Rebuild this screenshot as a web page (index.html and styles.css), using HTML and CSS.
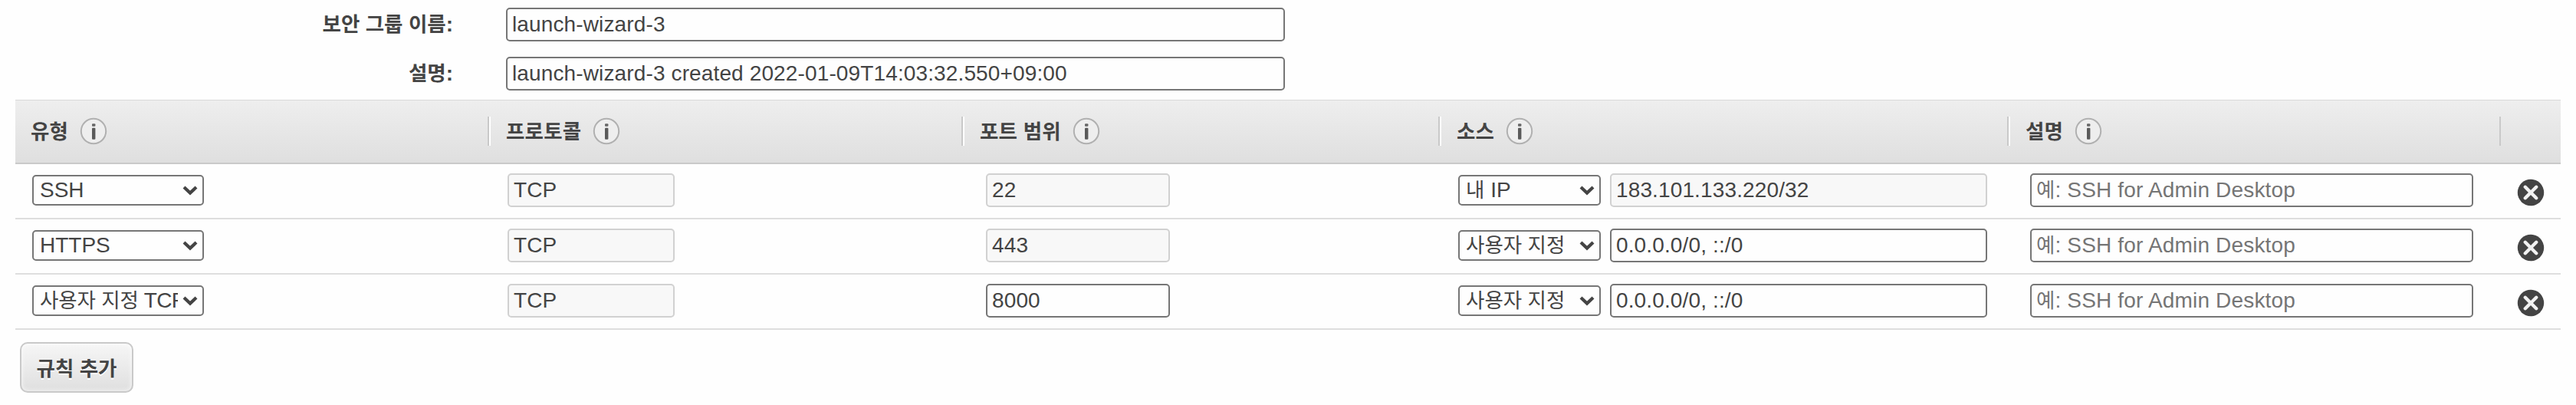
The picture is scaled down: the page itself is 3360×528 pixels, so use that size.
FILE: index.html
```
<!DOCTYPE html>
<html lang="ko">
<head>
<meta charset="utf-8">
<title>보안 그룹</title>
<link rel="stylesheet" href="styles.css">
</head>
<body>
<svg width="0" height="0" class="defs">
  <symbol id="info" viewBox="0 0 36 36"><circle cx="18" cy="18" r="16.2" fill="#eee" stroke="#b0b0b0" stroke-width="2"/><rect x="16" y="8.3" width="4.4" height="3.4" rx="1" fill="#666"/><rect x="16" y="13.8" width="4.4" height="15" rx="1" fill="#5a5a5a"/></symbol>
  <symbol id="chev" viewBox="0 0 20 14"><path d="M2 3 L10 10.6 L18 3" fill="none" stroke="#444" stroke-width="4.2"/></symbol>
  <symbol id="del" viewBox="0 0 36 36"><circle cx="18" cy="18" r="17.2" fill="#444"/><path d="M10.8 10.8 L25.2 25.2 M25.2 10.8 L10.8 25.2" stroke="#f2f2f2" stroke-width="4.4" stroke-linecap="round"/></symbol>
</svg>
<div class="form">
  <div class="field"><div class="label"><span class="ko">보안 그룹 이름</span>:</div><div class="input wide">launch-wizard-3</div></div>
  <div class="field"><div class="label"><span class="ko">설명</span>:</div><div class="input wide">launch-wizard-3 created 2022-01-09T14:03:32.550+09:00</div></div>
</div>
<div class="table">
  <div class="cols head">
    <div class="th first"><span class="ko">유형</span><svg class="info"><use href="#info"/></svg></div>
    <div class="th sep"><span class="ko">프로토콜</span><svg class="info"><use href="#info"/></svg></div>
    <div class="th sep"><span class="ko">포트 범위</span><svg class="info"><use href="#info"/></svg></div>
    <div class="th sep"><span class="ko">소스</span><svg class="info"><use href="#info"/></svg></div>
    <div class="th sep"><span class="ko">설명</span><svg class="info"><use href="#info"/></svg></div>
    <div class="th sep last"></div>
  </div>
  <div class="cols row">
    <div class="td type"><div class="select"><span class="value">SSH</span><svg class="chev"><use href="#chev"/></svg></div></div>
    <div class="td proto"><div class="input off">TCP</div></div>
    <div class="td port"><div class="input off">22</div></div>
    <div class="td source"><div class="select"><span class="value"><span class="ko">내</span> IP</span><svg class="chev"><use href="#chev"/></svg></div><div class="input off">183.101.133.220/32</div></div>
    <div class="td desc"><div class="input hint"><span class="ko">예</span>: SSH for Admin Desktop</div></div>
    <div class="td remove"><svg class="del"><use href="#del"/></svg></div>
  </div>
  <div class="cols row">
    <div class="td type"><div class="select"><span class="value">HTTPS</span><svg class="chev"><use href="#chev"/></svg></div></div>
    <div class="td proto"><div class="input off">TCP</div></div>
    <div class="td port"><div class="input off">443</div></div>
    <div class="td source"><div class="select"><span class="value"><span class="ko">사용자 지정</span></span><svg class="chev"><use href="#chev"/></svg></div><div class="input">0.0.0.0/0, ::/0</div></div>
    <div class="td desc"><div class="input hint"><span class="ko">예</span>: SSH for Admin Desktop</div></div>
    <div class="td remove"><svg class="del"><use href="#del"/></svg></div>
  </div>
  <div class="cols row">
    <div class="td type"><div class="select"><span class="value tight"><span class="ko">사용자 지정</span> TCP</span><svg class="chev"><use href="#chev"/></svg></div></div>
    <div class="td proto"><div class="input off">TCP</div></div>
    <div class="td port"><div class="input">8000</div></div>
    <div class="td source"><div class="select"><span class="value"><span class="ko">사용자 지정</span></span><svg class="chev"><use href="#chev"/></svg></div><div class="input">0.0.0.0/0, ::/0</div></div>
    <div class="td desc"><div class="input hint"><span class="ko">예</span>: SSH for Admin Desktop</div></div>
    <div class="td remove"><svg class="del"><use href="#del"/></svg></div>
  </div>
</div>
<div class="button"><span class="ko">규칙 추가</span></div>
</body>
</html>
```
FILE: styles.css
```
* { box-sizing: border-box; }
body {
  margin: 0;
  background: #fefefe;
  color: #444;
  font: 28px/40px "Liberation Sans", "Noto Sans CJK KR", sans-serif;
}
.defs { display: block; }
.ko { font-family: "Noto Sans CJK KR", sans-serif; font-size: 26.5px; line-height: 1; letter-spacing: 0; }
.form { display: flex; flex-direction: column; gap: 20px; padding-top: 10px; height: 130px; }
.field { display: flex; gap: 69px; }
.label { width: 591px; text-align: right; font-weight: bold; line-height: 44px; }
.input {
  flex: none;
  height: 44px;
  padding: 0 6px;
  border: 2px solid #767676;
  border-radius: 5px;
  white-space: nowrap;
  letter-spacing: .13px;
}
.wide { width: 1016px; }
.off { background: #f8f8f8; border-color: #d1d1d1; }
.hint { color: #757575; letter-spacing: .17px; }
.table { margin: 0 20px; }
.cols { display: grid; grid-template-columns: 616px 618px 622px 742px 642px 80px; }
.head {
  height: 84px;
  padding-top: 21px;
  border-top: 1px solid #d9d9d9;
  border-bottom: 2px solid #c9c9c9;
  background: linear-gradient(#eee, #dfdfdf);
  align-items: start;
  font-weight: bold;
}
.th { display: flex; align-items: center; height: 38px; padding-left: 22px; gap: 15px; }
.th .ko { padding-bottom: 2px; letter-spacing: .2px; }
.first { padding-left: 20px; }
.sep { border-left: 2px solid #c9c9c9; box-shadow: inset 2px 0 #fff; }
.last { box-shadow: none; }
.info { width: 36px; height: 36px; }
.row { height: 72px; border-bottom: 2px solid #dedede; }
.td { display: flex; align-items: center; padding-bottom: 2px; }
.type { padding-left: 22px; }
.proto { padding-left: 26px; }
.proto .input { width: 218px; }
.port { padding-left: 32px; }
.port .input { width: 240px; }
.source { padding-left: 26px; gap: 12px; }
.source .input { width: 492px; }
.desc { padding-left: 30px; }
.desc .input { width: 578px; }
.remove { padding: 4px 0 0 23px; }
.del { width: 36px; height: 36px; }
.select {
  display: flex;
  align-items: center;
  justify-content: space-between;
  width: 224px;
  height: 40px;
  padding: 0 6px 0 8px;
  border: 2px solid #767676;
  border-radius: 5px;
}
.source .select { width: 186px; }
.value { flex: 1; min-width: 0; height: 36px; line-height: 36px; white-space: nowrap; overflow: hidden; }
.tight { letter-spacing: -.7px; }
.tight .ko { letter-spacing: -.1px; }
.chev { flex: none; width: 20px; height: 14px; margin-left: 6px; }
.button {
  display: flex;
  align-items: center;
  justify-content: center;
  width: 148px;
  height: 66px;
  margin: 16px 0 0 26px;
  border: 2px solid #c9c9c9;
  border-radius: 10px;
  background: linear-gradient(#f6f6f6, #dfdfdf);
  box-shadow: inset 0 0 6px rgba(255, 255, 255, .8);
  font-weight: bold;
  text-shadow: 0 2px #fff;
}
```
